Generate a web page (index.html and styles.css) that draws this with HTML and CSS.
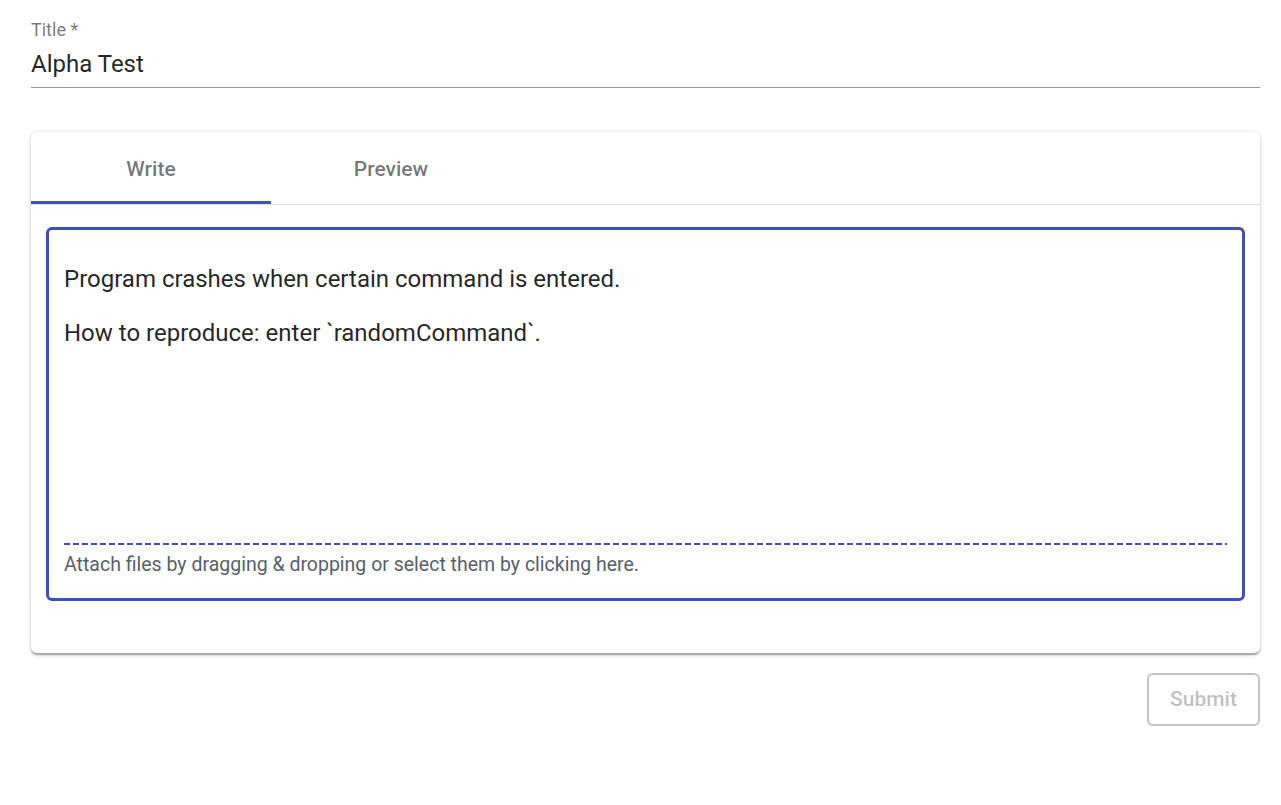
FILE: index.html
```html
<!DOCTYPE html>
<html lang="en">
<head>
<meta charset="utf-8">
<title>New issue</title>
<link rel="stylesheet" href="styles.css">
</head>
<body>
<main class="page">
  <div class="field">
    <label class="field-label">Title *</label>
    <div class="field-input">Alpha Test</div>
  </div>

  <section class="card">
    <div class="tabs">
      <div class="tab tab-active">Write</div>
      <div class="tab">Preview</div>
    </div>
    <div class="card-body">
      <div class="editor">
        <div class="editor-text">
          <p>Program crashes when certain command is entered.</p>
          <p>How to reproduce: enter `randomCommand`.</p>
        </div>
        <div class="attach">Attach files by dragging &amp; dropping or select them by clicking here.</div>
      </div>
    </div>
  </section>

  <div class="actions">
    <button class="submit" disabled>Submit</button>
  </div>
</main>
</body>
</html>
```

FILE: styles.css
```css
* { box-sizing: border-box; }

html, body {
  margin: 0;
  background: #ffffff;
  font-family: Roboto, "Liberation Sans", Arial, sans-serif;
}

.page {
  padding: 21px 21px 0 31px;
}

.field {
  display: flex;
  flex-direction: column;
}

.field-label {
  font-size: 18px;
  line-height: 18px;
  color: rgba(0, 0, 0, 0.54);
}

.field-input {
  font-size: 24px;
  line-height: 28.5px;
  padding: 11px 0 8.5px;
  color: rgba(0, 0, 0, 0.87);
  border-bottom: 1.5px solid rgba(0, 0, 0, 0.42);
}

.card {
  margin-top: 43.5px;
  background: #fff;
  border-radius: 6px;
  box-shadow: 0 1.5px 4.5px 0 rgba(0,0,0,0.2), 0 1.5px 1.5px 0 rgba(0,0,0,0.14), 0 3px 1.5px -1.5px rgba(0,0,0,0.12);
}

.tabs {
  display: flex;
  height: 73px;
  border-bottom: 1.5px solid #e0e0e0;
}

.tab {
  width: 240px;
  display: flex;
  align-items: center;
  justify-content: center;
  font-size: 21px;
  font-weight: 500;
  color: rgba(0, 0, 0, 0.54);
  padding-top: 3px;
}

.tab-active {
  box-shadow: inset 0 -3px 0 #3f51b5;
}

.card-body {
  padding: 22px 15px 52px;
}

.editor {
  border: 3px solid #3f51b5;
  border-radius: 6px;
  padding: 0 15px 20px;
}

.editor-text {
  height: 313px;
  padding-top: 13px;
  font-size: 24px;
  line-height: 36px;
  color: rgba(0, 0, 0, 0.87);
}

.editor-text p {
  margin: 18px 0 0;
}

.attach {
  padding-top: 9px;
  background-image: repeating-linear-gradient(90deg, #3f51b5 0, #3f51b5 6px, transparent 6px, transparent 9px);
  background-size: 100% 2px;
  background-repeat: no-repeat;
  font-size: 19.5px;
  line-height: 26px;
  color: #586069;
}

.actions {
  display: flex;
  justify-content: flex-end;
  padding-top: 20px;
}

.submit {
  width: 113px;
  height: 53px;
  border: 2px solid #c4c4c4;
  border-radius: 6px;
  background: #fff;
  font-family: Roboto, "Liberation Sans", Arial, sans-serif;
  font-size: 21px;
  font-weight: 500;
  color: rgba(0, 0, 0, 0.26);
}
```
